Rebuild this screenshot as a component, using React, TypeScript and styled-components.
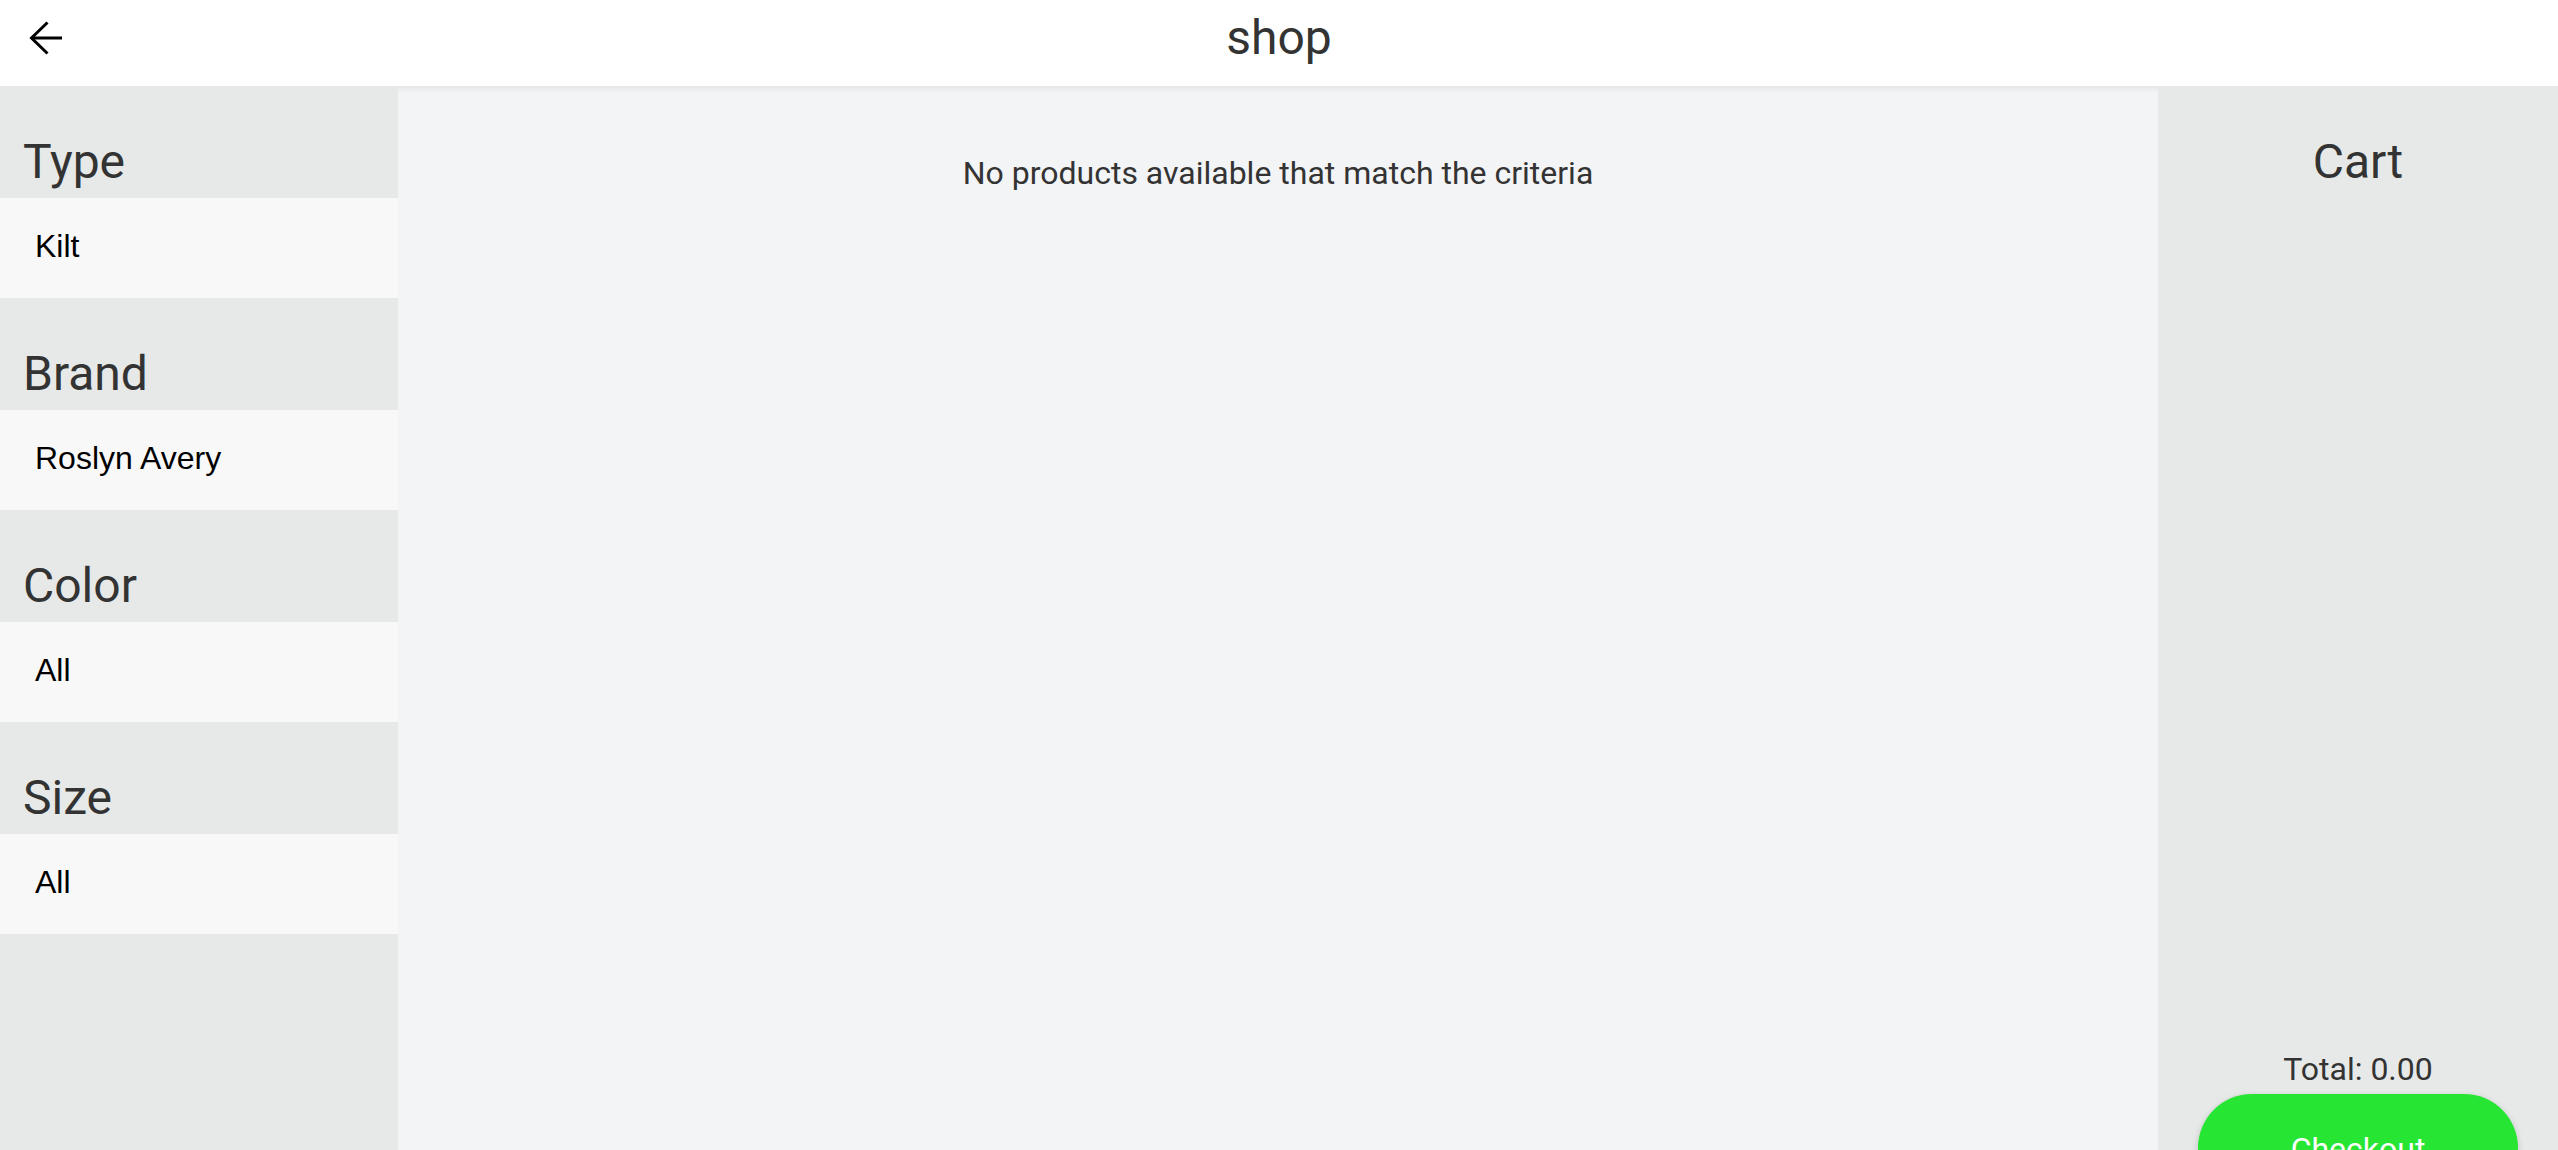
import React from 'react';
import styled, { createGlobalStyle } from 'styled-components';

const GlobalStyle = createGlobalStyle`
  html, body {
    margin: 0;
    padding: 0;
    overflow: hidden;
    background: #ffffff;
    font-family: Roboto, "Liberation Sans", sans-serif;
  }
  * {
    box-sizing: border-box;
  }
`;

const Page = styled.div`
  display: flex;
  flex-direction: column;
  width: 100%;
`;

const Header = styled.header`
  display: grid;
  grid-template-columns: 1fr auto 1fr;
  height: 86px;
  background: #ffffff;
  position: relative;
  z-index: 2;
`;

const BackButton = styled.button`
  justify-self: start;
  border: none;
  background: none;
  padding: 0;
  margin: 21px 0 0 29px;
  width: 34px;
  height: 34px;
  cursor: pointer;
  display: flex;
`;

const Title = styled.h1`
  margin: 0;
  padding-top: 10px;
  font-size: 48px;
  line-height: 56px;
  font-weight: 400;
  color: #333333;
`;

const Body = styled.div`
  display: grid;
  grid-template-columns: 398px 1fr 400px;
  height: 1150px;
`;

const Sidebar = styled.aside`
  background: #e7e9e8;
  display: flex;
  flex-direction: column;
`;

const FilterHeading = styled.h2`
  margin: 0;
  padding: 48px 0 8px 23px;
  font-size: 48px;
  line-height: 56px;
  font-weight: 400;
  color: #333333;
`;

const FilterValue = styled.div`
  height: 100px;
  display: flex;
  align-items: center;
  padding: 0 0 3px 35px;
  background: #f8f8f8;
  font-family: "Liberation Sans", Arial, sans-serif;
  font-size: 32px;
  color: #000000;
`;

const Main = styled.main`
  background: #f3f4f6;
  box-shadow: inset 0 7px 9px -7px rgba(0, 0, 0, 0.12);
  text-align: center;
  padding-top: 68px;
`;

const EmptyText = styled.p`
  margin: 0;
  font-size: 32px;
  line-height: 38px;
  color: #333333;
`;

const Cart = styled.aside`
  background: #e7e9e8;
  display: flex;
  flex-direction: column;
  align-items: center;
  padding: 0 40px 34px;
`;

const CartTitle = styled.h2`
  margin: 0;
  padding-top: 48px;
  font-size: 48px;
  line-height: 56px;
  font-weight: 400;
  color: #333333;
`;

const CartItems = styled.div`
  flex: 1;
`;

const Total = styled.div`
  font-size: 32px;
  line-height: 38px;
  color: #333333;
  margin-bottom: 6px;
`;

const CheckoutButton = styled.button`
  width: 100%;
  height: 108px;
  border: none;
  border-radius: 54px;
  background: #27e533;
  color: #ffffff;
  font-family: Roboto, "Liberation Sans", sans-serif;
  font-size: 32px;
  line-height: 38px;
  padding: 36px 0 0;
  display: flex;
  justify-content: center;
  align-items: flex-start;
  box-shadow: 0 2px 6px rgba(0, 0, 0, 0.18);
  cursor: pointer;
`;

const filters = [
  { label: 'Type', value: 'Kilt' },
  { label: 'Brand', value: 'Roslyn Avery' },
  { label: 'Color', value: 'All' },
  { label: 'Size', value: 'All' },
];

const ArrowBack = () => (
  <svg width="34" height="34" viewBox="0 0 34 34" fill="none">
    <path d="M2 17H33" stroke="#000" strokeWidth="3" />
    <path d="M18.5 1.5L2.5 17L18.5 32.5" stroke="#000" strokeWidth="3" />
  </svg>
);

export default function App() {
  return (
    <Page>
      <GlobalStyle />
      <Header>
        <BackButton aria-label="back">
          <ArrowBack />
        </BackButton>
        <Title>shop</Title>
        <div />
      </Header>
      <Body>
        <Sidebar>
          {filters.map((f) => (
            <React.Fragment key={f.label}>
              <FilterHeading>{f.label}</FilterHeading>
              <FilterValue>{f.value}</FilterValue>
            </React.Fragment>
          ))}
        </Sidebar>
        <Main>
          <EmptyText>No products available that match the criteria</EmptyText>
        </Main>
        <Cart>
          <CartTitle>Cart</CartTitle>
          <CartItems />
          <Total>Total: 0.00</Total>
          <CheckoutButton>Checkout</CheckoutButton>
        </Cart>
      </Body>
    </Page>
  );
}
